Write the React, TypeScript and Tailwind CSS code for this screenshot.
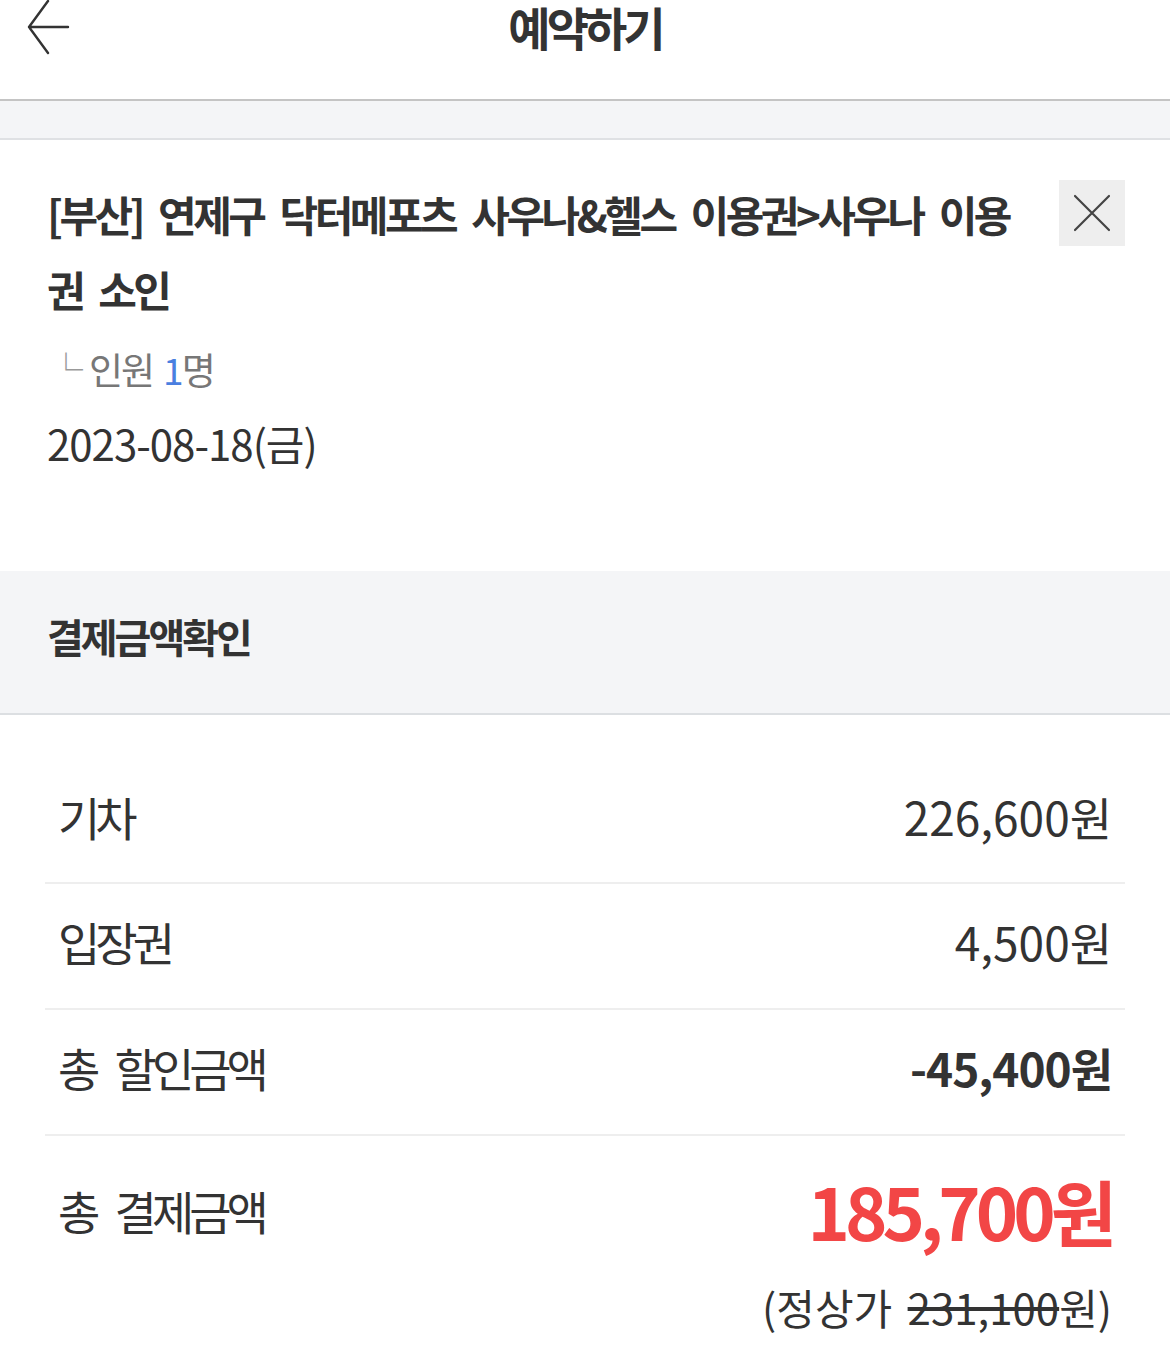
import React from 'react'

const font = { fontFamily: '"Noto Sans CJK KR", "Noto Sans", sans-serif' }

function BackArrow() {
  return (
    <svg width="44" height="56" viewBox="0 0 44 56" fill="none">
      <path d="M42 27H3M22 1L3 27l19 26" stroke="#333" strokeWidth="2.4" strokeLinecap="round" strokeLinejoin="round" />
    </svg>
  )
}

function CloseIcon() {
  return (
    <svg width="40" height="40" viewBox="0 0 40 40" fill="none">
      <path d="M3 3l34 34M37 3L3 37" stroke="#444" strokeWidth="2.2" strokeLinecap="round" />
    </svg>
  )
}

function PriceRow({ label, value, first, bold }: { label: string; value: string; first?: boolean; bold?: boolean }) {
  return (
    <div
      className={
        'flex items-center justify-between border-b-2 border-[#eeeeee] pb-[10px] ' +
        (first ? 'h-[169px] pt-[45px]' : 'h-[126px]')
      }
    >
      <span className="pl-[13px] text-[46px] leading-none tracking-[-5px] text-[#333] [word-spacing:14px]">{label}</span>
      <span
        className={
          'pr-[13px] text-[46px] leading-none text-[#333] ' + (bold ? 'font-bold tracking-[-1px]' : 'tracking-[0px]')
        }
      >
        {value}
      </span>
    </div>
  )
}

export default function App() {
  return (
    <div className="min-h-screen w-full bg-white" style={font}>
      {/* 헤더 */}
      <div className="relative h-[101px] border-b-2 border-[#c4c4c4]">
        <div className="flex h-[52px] items-center justify-center">
          <h1 className="text-[46px] font-bold leading-[54px] tracking-[-4px] text-[#333]">예약하기</h1>
        </div>
        <button className="absolute left-[26px] top-0">
          <BackArrow />
        </button>
      </div>
      <div className="h-[39px] border-b-2 border-[#dfe1e4] bg-[#f4f5f7]" />

      {/* 상품 정보 */}
      <div className="flex items-start pl-[47px] pr-[45px] pt-[36px] pb-[103px]">
        <div className="flex-1">
          <p className="text-[42px] font-bold leading-[75px] tracking-[-3.5px] text-[#333] [word-spacing:10px]">
            [부산] 연제구 닥터메포츠 사우나&헬스 이용권&gt;사우나 이용권 소인
          </p>
          <div className="mt-[18px] flex items-center text-[37px] leading-[50px] tracking-[-2px] text-[#777]">
            <span className="mr-[8px] ml-[2px] text-[34px] leading-none text-[#999]">└</span>
            <span>인원</span>
            <span className="ml-[10px] text-[#4a7fe0]">1</span>
            <span>명</span>
          </div>
          <p className="mt-[24px] text-[42px] leading-[50px] tracking-[-1px] text-[#333]">2023-08-18(금)</p>
        </div>
        <button className="ml-[24px] mt-[4px] flex h-[66px] w-[66px] items-center justify-center bg-[#eeeeee]">
          <CloseIcon />
        </button>
      </div>

      {/* 결제금액확인 */}
      <div className="flex h-[144px] items-center border-b-2 border-[#dcdfe2] bg-[#f4f5f7] pb-[12px] pl-[47px]">
        <h2 className="text-[40px] font-bold leading-none tracking-[-3px] text-[#333]">결제금액확인</h2>
      </div>

      <div className="mx-[45px]">
        <PriceRow label="기차" value="226,600원" first />
        <PriceRow label="입장권" value="4,500원" />
        <PriceRow label="총 할인금액" value="-45,400원" bold />
        <div className="flex h-[150px] items-center justify-between pb-[2px]">
          <span className="pl-[13px] text-[46px] leading-none tracking-[-5px] text-[#333] [word-spacing:14px]">총 결제금액</span>
          <span className="pr-[13px] text-[72px] font-bold leading-none tracking-[-5px] text-[#f24646]">185,700원</span>
        </div>
        <div className="flex justify-end pr-[13px]">
          <span className="text-[42px] leading-none tracking-[0px] text-[#333] [word-spacing:6px]">
            (정상가 <span className="line-through">231,100</span>원)
          </span>
        </div>
      </div>
    </div>
  )
}
